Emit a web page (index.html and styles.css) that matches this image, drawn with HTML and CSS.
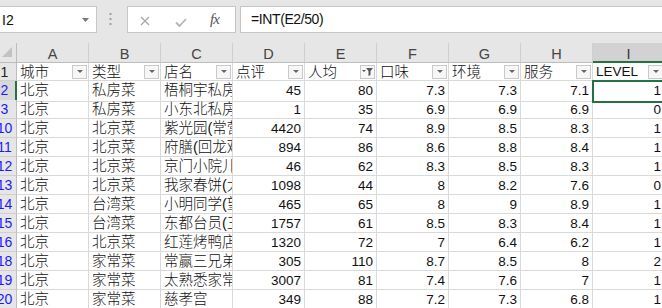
FILE: index.html
```html
<!DOCTYPE html>
<html lang="zh-CN">
<head>
    <meta charset="UTF-8">
    <link rel="stylesheet" href="styles.css">
    <title>餐厅数据 - 筛选</title>
</head>
<body>
    <div class="topbar">
        <div class="namebox">
            <span>I2</span>
            <svg width="7" height="4" viewBox="0 0 7 4"><polygon points="0,0 7,0 3.5,4" fill="#777"/></svg>
        </div>
        <svg class="grip" width="3" height="12" viewBox="0 0 3 12">
            <rect x="0.5" y="0" width="2" height="2" fill="#a0a0a0"/>
            <rect x="0.5" y="5" width="2" height="2" fill="#a0a0a0"/>
            <rect x="0.5" y="10" width="2" height="2" fill="#a0a0a0"/>
        </svg>
        <div class="fxbox">
            <svg class="btn-x" width="10" height="10" viewBox="0 0 10 10"><path d="M1 1 L9 9 M9 1 L1 9" stroke="#a8a8a8" stroke-width="1.3"/></svg>
            <svg class="btn-ok" width="12" height="9" viewBox="0 0 12 9"><path d="M1 4.5 L4.5 8 L11 1" stroke="#b4b4b4" stroke-width="1.8" fill="none"/></svg>
            <span class="fx">fx</span>
        </div>
        <div class="formula">=INT(E2/50)</div>
    </div>

    <div class="sheet">
        <div class="row colhead">
            <div class="corner"><svg width="11" height="10" viewBox="0 0 11 10"><polygon points="0,10 10,10 10,0" fill="#c2c2c2"/></svg></div>
            <div>A</div><div>B</div><div>C</div><div>D</div><div>E</div><div>F</div><div>G</div><div>H</div><div class="sel">I</div>
        </div>

        <div class="row head">
            <div class="rh dark"><span>1</span></div>
            <div class="hc"><span>城市</span><i class="flt"></i></div>
            <div class="hc"><span>类型</span><i class="flt"></i></div>
            <div class="hc"><span>店名</span><i class="flt"></i></div>
            <div class="hc"><span>点评</span><i class="flt"></i></div>
            <div class="hc"><span>人均</span><i class="flt on"><svg width="13" height="12" viewBox="0 0 13 12"><polygon points="1,4 5,4 3,6" fill="#555"/><polygon points="5,2 12,2 9.5,5 9.5,9 7.5,10 7.5,5" fill="#555"/></svg></i></div>
            <div class="hc"><span>口味</span><i class="flt"></i></div>
            <div class="hc"><span>环境</span><i class="flt"></i></div>
            <div class="hc"><span>服务</span><i class="flt"></i></div>
            <div class="hc latin"><span>LEVEL</span><i class="flt"></i></div>
        </div>

        <div class="row">
            <div class="rh active"><span>2</span></div>
            <div>北京</div><div>私房菜</div><div>梧桐宇私房菜</div>
            <div class="n">45</div><div class="n">80</div><div class="n">7.3</div><div class="n">7.3</div><div class="n">7.1</div><div class="n cur">1</div>
        </div>
        <div class="row">
            <div class="rh"><span>3</span></div>
            <div>北京</div><div>私房菜</div><div>小东北私房菜</div>
            <div class="n">1</div><div class="n">35</div><div class="n">6.9</div><div class="n">6.9</div><div class="n">6.9</div><div class="n">0</div>
        </div>
        <div class="row">
            <div class="rh"><span>10</span></div>
            <div>北京</div><div>北京菜</div><div>紫光园(常营店)</div>
            <div class="n">4420</div><div class="n">74</div><div class="n">8.9</div><div class="n">8.5</div><div class="n">8.3</div><div class="n">1</div>
        </div>
        <div class="row">
            <div class="rh"><span>11</span></div>
            <div>北京</div><div>北京菜</div><div>府膳(回龙观店)</div>
            <div class="n">894</div><div class="n">86</div><div class="n">8.6</div><div class="n">8.8</div><div class="n">8.4</div><div class="n">1</div>
        </div>
        <div class="row">
            <div class="rh"><span>12</span></div>
            <div>北京</div><div>北京菜</div><div>京门小院儿</div>
            <div class="n">46</div><div class="n">62</div><div class="n">8.3</div><div class="n">8.5</div><div class="n">8.3</div><div class="n">1</div>
        </div>
        <div class="row">
            <div class="rh"><span>13</span></div>
            <div>北京</div><div>北京菜</div><div>我家春饼(大悦城店)</div>
            <div class="n">1098</div><div class="n">44</div><div class="n">8</div><div class="n">8.2</div><div class="n">7.6</div><div class="n">0</div>
        </div>
        <div class="row">
            <div class="rh"><span>14</span></div>
            <div>北京</div><div>台湾菜</div><div>小明同学(望京店)</div>
            <div class="n">465</div><div class="n">65</div><div class="n">8</div><div class="n">9</div><div class="n">8.9</div><div class="n">1</div>
        </div>
        <div class="row">
            <div class="rh"><span>15</span></div>
            <div>北京</div><div>台湾菜</div><div>东都台员(三里屯店)</div>
            <div class="n">1757</div><div class="n">61</div><div class="n">8.5</div><div class="n">8.3</div><div class="n">8.4</div><div class="n">1</div>
        </div>
        <div class="row">
            <div class="rh"><span>16</span></div>
            <div>北京</div><div>北京菜</div><div>红莲烤鸭店</div>
            <div class="n">1320</div><div class="n">72</div><div class="n">7</div><div class="n">6.4</div><div class="n">6.2</div><div class="n">1</div>
        </div>
        <div class="row">
            <div class="rh"><span>18</span></div>
            <div>北京</div><div>家常菜</div><div>常赢三兄弟</div>
            <div class="n">305</div><div class="n">110</div><div class="n">8.7</div><div class="n">8.5</div><div class="n">8</div><div class="n">2</div>
        </div>
        <div class="row">
            <div class="rh"><span>19</span></div>
            <div>北京</div><div>家常菜</div><div>太熟悉家常菜</div>
            <div class="n">3007</div><div class="n">81</div><div class="n">7.4</div><div class="n">7.6</div><div class="n">7</div><div class="n">1</div>
        </div>
        <div class="row">
            <div class="rh"><span>20</span></div>
            <div>北京</div><div>家常菜</div><div>慈孝宫</div>
            <div class="n">349</div><div class="n">88</div><div class="n">7.2</div><div class="n">7.3</div><div class="n">6.8</div><div class="n">1</div>
        </div>
    </div>
</body>
</html>
```

FILE: styles.css
```css
body {
    margin: 0;
    width: 662px;
    height: 308px;
    overflow: hidden;
    background-color: #fff;
    font-family: "Liberation Sans", "Noto Sans CJK SC", sans-serif;
    color: #111;
}

/* formula bar */
.topbar {
    display: flex;
    align-items: flex-start;
    height: 43px;
    box-sizing: border-box;
    padding-top: 6px;
    background-color: #e6e6e6;
}

.namebox {
    width: 97px;
    height: 27px;
    flex: none;
    box-sizing: border-box;
    display: flex;
    align-items: center;
    justify-content: space-between;
    padding: 0 7px 0 2px;
    background-color: #fff;
    border: 1px solid #c6c6c6;
    border-left: none;
    font-size: 14px;
}

.grip {
    flex: none;
    margin: 7px 15px 0 12px;
}

.fxbox {
    width: 109px;
    height: 27px;
    flex: none;
    box-sizing: border-box;
    display: flex;
    align-items: center;
    padding-left: 12px;
    margin-right: 4px;
    background-color: #fff;
    border: 1px solid #c6c6c6;
}

.btn-x {
    margin-top: 3px;
}

.btn-ok {
    margin: 6px 0 0 25px;
}

.fx {
    margin-left: 23px;
    font-family: "Liberation Serif", serif;
    font-style: italic;
    font-size: 15px;
    color: #555;
    letter-spacing: -1px;
}

.formula {
    flex: 1;
    height: 27px;
    box-sizing: border-box;
    margin-right: -2px;
    padding-left: 10px;
    background-color: #fff;
    border: 1px solid #c6c6c6;
    font-size: 14px;
    letter-spacing: -0.4px;
    line-height: 25px;
}

/* grid */
.row {
    display: grid;
    grid-template-columns: 17px repeat(9, 72px);
    height: 19px;
}

.row > div {
    box-sizing: border-box;
    border-right: 1px solid #d9d9d9;
    border-bottom: 1px solid #d9d9d9;
    padding: 0 3px;
    overflow: hidden;
    white-space: nowrap;
    font-size: 14.5px;
    font-weight: 300;
    line-height: 18px;
}

.row > .n {
    text-align: right;
    font-size: 13.5px;
    font-weight: normal;
    line-height: 20px;
}

.row > .cur {
    position: relative;
    z-index: 1;
    overflow: visible;
    outline: 2px solid #217346;
    outline-offset: -1px;
}

.colhead {
    height: 20px;
}

.colhead > div {
    background-color: #e6e6e6;
    border-right-color: #cfcfcf;
    border-bottom-color: #bdbdbd;
    text-align: center;
    font-size: 14.5px;
    font-weight: normal;
    line-height: 22px;
    color: #444;
}

.colhead > .corner {
    display: flex;
    align-items: flex-end;
    justify-content: flex-end;
    padding: 0 3px 5px 0;
    border-right-color: #bdbdbd;
}

.colhead > .sel {
    background-color: #d2d2d2;
    border-bottom: 2px solid #217346;
    color: #333;
}

.head {
    height: 18px;
}

.hc {
    display: flex;
    align-items: center;
    justify-content: space-between;
}

.hc span {
    overflow: hidden;
}

.row > .latin {
    font-size: 13.5px;
    font-weight: normal;
}

.flt {
    width: 15px;
    height: 14px;
    flex: none;
    box-sizing: border-box;
    margin-right: -2px;
    display: flex;
    align-items: center;
    justify-content: center;
    background-color: #f7f7f7;
    border: 1px solid #c9c9c9;
}

.flt::after {
    content: "";
    border-top: 3px solid #666;
    border-left: 3px solid transparent;
    border-right: 3px solid transparent;
}

.flt.on::after {
    display: none;
}

/* row numbers */
.row > .rh {
    padding: 0;
    background-color: #e6e6e6;
    border-right-color: #bdbdbd;
    border-bottom-color: #cfcfcf;
    color: #1a1aff;
    font-size: 14px;
    font-weight: normal;
}

.rh span {
    display: block;
    width: 25px;
    margin-left: -8px;
    text-align: center;
}

.row > .dark {
    color: #222;
}

.row > .active {
    background-color: #d8d8d8;
    border-right: 2px solid #217346;
}
```
